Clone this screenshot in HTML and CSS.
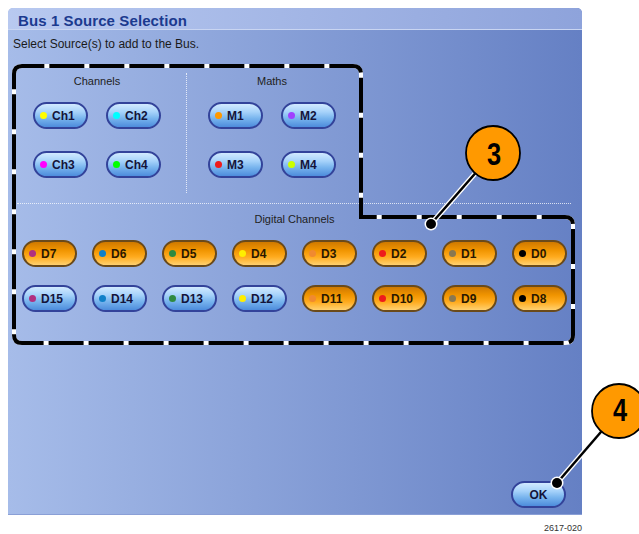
FILE: index.html
```html
<!DOCTYPE html>
<html lang="en">

<head>
    <meta charset="UTF-8">
    <meta name="viewport" content="width=device-width, initial-scale=1.0">
    <link rel="stylesheet" href="styles.css">

    <title>Bus 1 Source Selection</title>
</head>

<body>
    <div class="dialog">
        <div class="titlebar">Bus 1 Source Selection</div>
        <p class="hint">Select Source(s) to add to the Bus.</p>

        <div class="groups">
            <div class="group">
                <div class="group-label">Channels</div>
                <div class="pair-grid">
                    <button class="src blue"><span class="dot yellow"></span>Ch1</button>
                    <button class="src blue"><span class="dot cyan"></span>Ch2</button>
                    <button class="src blue"><span class="dot magenta"></span>Ch3</button>
                    <button class="src blue"><span class="dot green"></span>Ch4</button>
                </div>
            </div>
            <div class="vrule"></div>
            <div class="group">
                <div class="group-label">Maths</div>
                <div class="pair-grid">
                    <button class="src blue"><span class="dot orange"></span>M1</button>
                    <button class="src blue"><span class="dot purple"></span>M2</button>
                    <button class="src blue"><span class="dot red"></span>M3</button>
                    <button class="src blue"><span class="dot lime"></span>M4</button>
                </div>
            </div>
        </div>

        <div class="hrule"></div>

        <div class="digital">
            <div class="group-label">Digital Channels</div>
            <div class="digital-grid">
                <button class="src amber"><span class="dot plum"></span>D7</button>
                <button class="src amber"><span class="dot sky"></span>D6</button>
                <button class="src amber"><span class="dot forest"></span>D5</button>
                <button class="src amber"><span class="dot gold"></span>D4</button>
                <button class="src amber"><span class="dot tan"></span>D3</button>
                <button class="src amber"><span class="dot red"></span>D2</button>
                <button class="src amber"><span class="dot olive"></span>D1</button>
                <button class="src amber"><span class="dot black"></span>D0</button>

                <button class="src blue"><span class="dot plum"></span>D15</button>
                <button class="src blue"><span class="dot sky"></span>D14</button>
                <button class="src blue"><span class="dot forest"></span>D13</button>
                <button class="src blue"><span class="dot gold"></span>D12</button>
                <button class="src amber"><span class="dot tan"></span>D11</button>
                <button class="src amber"><span class="dot red"></span>D10</button>
                <button class="src amber"><span class="dot olive"></span>D9</button>
                <button class="src amber"><span class="dot black"></span>D8</button>
            </div>
        </div>

        <div class="footer">
            <button class="src blue ok">OK</button>
        </div>
    </div>
    <div class="figno">2617-020</div>

    <!-- annotation layer: dashed highlight and numbered callouts -->
    <svg class="marks" width="639" height="534" viewBox="0 0 639 534">
        <path class="outline-base" d="M14,74 Q14,66 22,66 H353 Q361,66 361,74 V217 H565 Q573,217 573,225 V335 Q573,343 565,343 H22 Q14,343 14,335 Z" />
        <path class="outline-dash" d="M14,74 Q14,66 22,66 H353 Q361,66 361,74 V217 H565 Q573,217 573,225 V335 Q573,343 565,343 H22 Q14,343 14,335 Z" />

        <line class="leader-halo" x1="431" y1="224" x2="493" y2="153" />
        <line class="leader" x1="431" y1="224" x2="493" y2="153" />
        <circle class="tip-halo" cx="431" cy="224" r="6.5" />
        <circle class="tip" cx="431" cy="224" r="5" />
        <circle class="bubble" cx="493" cy="153" r="27" />
        <text class="num" x="494" y="165">3</text>

        <line class="leader-halo" x1="557" y1="483" x2="619" y2="411" />
        <line class="leader" x1="557" y1="483" x2="619" y2="411" />
        <circle class="tip-halo" cx="557" cy="483" r="6.5" />
        <circle class="tip" cx="557" cy="483" r="5" />
        <circle class="bubble" cx="619" cy="411" r="27" />
        <text class="num" x="620" y="421">4</text>
    </svg>
</body>

</html>
```

FILE: styles.css
```css
body {
    box-sizing: border-box;
    width: 639px;
    height: 534px;
    margin: 0;
    padding: 8px 0 0 8px;
    position: relative;
    overflow: hidden;
    background-color: #fff;
    font-family: "Liberation Sans", Arial, sans-serif;
}

.dialog {
    box-sizing: border-box;
    width: 574px;
    height: 507px;
    display: flex;
    flex-direction: column;
    background: linear-gradient(to right, #a6bce9, #6580c4);
    border-radius: 5px 5px 0 0;
    border-bottom: 1px solid #8a9fd6;
    overflow: hidden;
}

.titlebar {
    box-sizing: border-box;
    height: 22px;
    padding: 4px 0 0 10px;
    line-height: 17px;
    font-size: 15px;
    font-weight: bold;
    letter-spacing: 0.1px;
    color: #1b3a8f;
    background: linear-gradient(to right, #b8c9f0, #8ea3db);
    border-bottom: 1px solid #c9d5f2;
}

.hint {
    margin: 0;
    padding: 6px 0 0 5px;
    font-size: 12px;
    line-height: 16px;
    color: #1a1a1a;
}

.groups {
    display: flex;
    height: 120px;
    margin-top: 21px;
    padding-left: 9px;
}

.group {
    width: 160px;
    padding-top: 1px;
    display: flex;
    flex-direction: column;
    align-items: center;
}

.group-label {
    font-size: 11px;
    line-height: 14px;
    color: #222;
    text-align: center;
}

.pair-grid {
    display: grid;
    grid-template-columns: 55px 55px;
    column-gap: 18px;
    row-gap: 22px;
    margin-top: 14px;
}

.vrule {
    margin: 0 5px 0 9px;
    border-left: 1px dotted rgba(255, 255, 255, 0.75);
}

.hrule {
    width: 554px;
    margin: 10px 0 0 9px;
    border-top: 1px dotted rgba(255, 255, 255, 0.75);
}

.digital {
    width: 545px;
    margin: 8px 0 0 14px;
}

.digital-grid {
    display: grid;
    grid-template-columns: repeat(8, 55px);
    column-gap: 15px;
    row-gap: 18px;
    margin-top: 14px;
}

.footer {
    margin-top: auto;
    display: flex;
    justify-content: flex-end;
    padding: 0 16px 6px 0;
}

.src {
    box-sizing: border-box;
    width: 55px;
    height: 27px;
    display: flex;
    align-items: center;
    gap: 5px;
    padding: 0 0 0 5px;
    border: 2px solid #33439a;
    border-radius: 14px;
    font: bold 12px "Liberation Sans", Arial, sans-serif;
    color: #14143a;
    cursor: pointer;
}

.blue {
    background: linear-gradient(to bottom, #d2eaff 0%, #a6d2fa 35%, #79b5ee 62%, #4d8cdc 100%);
}

.amber {
    border-color: #6a4a1a;
    color: #2a1800;
    background: linear-gradient(to bottom, #cf7900 0%, #f09400 35%, #ffab1e 65%, #ffd170 100%);
}

.ok {
    justify-content: center;
    padding: 0;
}

.dot {
    width: 7px;
    height: 7px;
    border-radius: 50%;
    flex: none;
}

.yellow { background: #ffff00; }
.cyan { background: #00ffff; }
.magenta { background: #ff00ff; }
.green { background: #00ff00; }
.orange { background: #ff9900; }
.purple { background: #a040ff; }
.red { background: #ee1c1c; }
.lime { background: #ccff00; }
.plum { background: #b03080; }
.sky { background: #1080c8; }
.forest { background: #2f8a40; }
.gold { background: #ffee00; }
.tan { background: #f08a30; }
.olive { background: #8a7850; }
.black { background: #000; }

.figno {
    width: 574px;
    margin-top: 8px;
    text-align: right;
    font-size: 9px;
    line-height: 11px;
    color: #333;
}

.marks {
    position: absolute;
    top: 0;
    left: 0;
    pointer-events: none;
}

.outline-base {
    fill: none;
    stroke: #fff;
    stroke-width: 4;
}

.outline-dash {
    fill: none;
    stroke: #000;
    stroke-width: 4;
    stroke-dasharray: 35 5;
}

.leader-halo {
    stroke: #fff;
    stroke-width: 5;
}

.leader {
    stroke: #000;
    stroke-width: 2.5;
}

.tip-halo {
    fill: #fff;
}

.tip {
    fill: #000;
}

.bubble {
    fill: #ff9900;
    stroke: #000;
    stroke-width: 1.8;
}

.num {
    font: bold 31px "Liberation Sans", Arial, sans-serif;
    text-anchor: middle;
    fill: #000;
    transform-box: fill-box;
    transform-origin: center;
    transform: scaleX(0.82);
}
```
